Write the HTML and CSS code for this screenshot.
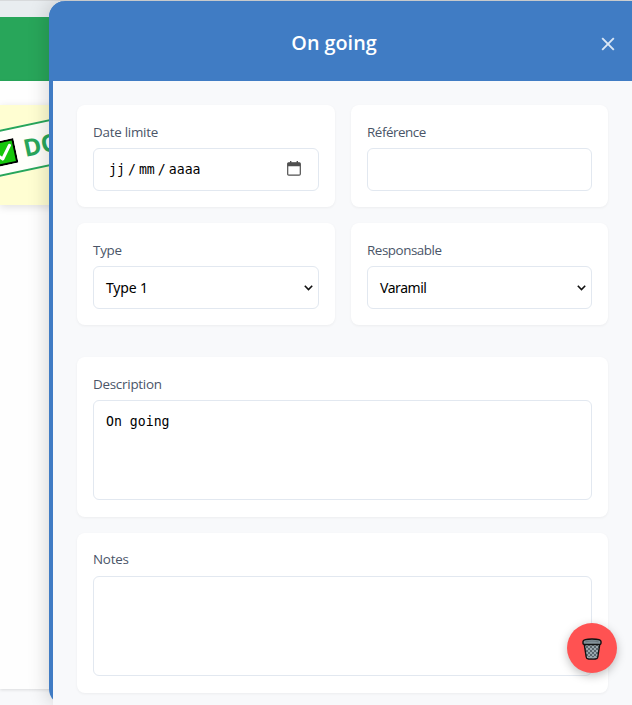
FILE: index.html
```html
<!DOCTYPE html>
<html lang="fr">
<head>
<meta charset="utf-8">
<title>On going</title>
<link rel="stylesheet" href="styles.css">
</head>
<body>
<div class="board">
  <div class="board-bar"></div>
  <div class="board-column">
    <div class="task">
      <div class="stamp">
        <svg class="check" viewBox="0 0 24 24"><rect x="1" y="1" width="22" height="22" fill="#16c60c" stroke="#000" stroke-width="2"/><path d="M5 12.5l5 5L19 6" fill="none" stroke="#fff" stroke-width="3" stroke-linecap="round" stroke-linejoin="round"/></svg>
        <span>DONE</span>
      </div>
    </div>
  </div>
</div>
<aside class="panel">
  <header class="panel-header">
    <h2>On going</h2>
    <svg class="close" viewBox="0 0 14 14"><path d="M1.2 1.2l11.6 11.6M12.8 1.2L1.2 12.8" stroke="currentColor" stroke-width="1.9" fill="none"/></svg>
  </header>
  <main class="panel-body">
    <div class="grid">
      <section class="card"><label>Date limite</label>
        <div class="field date"><span>jj</span><i>/</i><span>mm</span><i>/</i><span>aaaa</span>
          <svg class="calendar" viewBox="0 0 14 15"><path d="M1.8 1.8h10.4q1.1 0 1.1 1.1v10.2q0 1.1-1.1 1.1H1.8q-1.1 0-1.1-1.1V2.9q0-1.1 1.1-1.1z" fill="none" stroke="#505050" stroke-width="1.2"/><path d="M.7 1.7h12.6v3.6H.7zM3 0h1.4v2H3zM9.6 0H11v2H9.6z" fill="#505050"/></svg>
        </div></section>
      <section class="card"><label class="tight">Référence</label><div class="field"></div></section>
      <section class="card"><label>Type</label>
        <div class="field select"><span>Type 1</span><svg class="chevron" viewBox="0 0 9 6"><path d="M.8.8l3.7 3.8L8.2.8" fill="none" stroke="#111" stroke-width="1.6"/></svg></div></section>
      <section class="card"><label class="tight">Responsable</label>
        <div class="field select name"><span>Varamil</span><svg class="chevron" viewBox="0 0 9 6"><path d="M.8.8l3.7 3.8L8.2.8" fill="none" stroke="#111" stroke-width="1.6"/></svg></div></section>
    </div>
    <section class="card tall"><label>Description</label><div class="field area">On going</div></section>
    <section class="card tall"><label class="notes">Notes</label><div class="field area"></div></section>
  </main>
</aside>
<button class="delete" aria-label="Supprimer">
  <svg viewBox="0 0 20 22"><defs><pattern id="mesh" width="4" height="4" patternUnits="userSpaceOnUse"><rect width="4" height="4" fill="#9aa7ad"/><path d="M0 0h2v2H0zM2 2h2v2H2z" fill="#59666d"/></pattern></defs>
    <path d="M2.1 5.5L4.2 19Q4.5 21 6.5 21h7q2 0 2.3-2L17.9 5.5z" fill="url(#mesh)" stroke="#111" stroke-width="1.4"/>
    <path d="M5.2 19.2q4.8 1.1 9.6 0" fill="none" stroke="#9aa7ad" stroke-width="1.2"/>
    <path d="M1 3.6Q1 1 10 1t9 2.6v1.6q0 1.3-2 1.3H3q-2 0-2-1.3z" fill="#84939a" stroke="#111" stroke-width="1.4"/>
    <path d="M3.5 3.8q6.5-1.6 13 0" fill="none" stroke="#6b7980" stroke-width="1.2"/></svg>
</button>
</body>
</html>
```
FILE: styles.css
```css
* { box-sizing: border-box; }
body {
  margin: 0;
  width: 632px;
  height: 705px;
  position: relative;
  overflow: hidden;
  background: #f8f9fb;
  font-family: "Open Sans", "Noto Sans", sans-serif;
}
.board {
  height: 705px;
  padding-top: 16px;
  border-top: 1px solid #d8dadc;
  background: linear-gradient(#e9edf0 16px, #f8f9fb 16px);
}
.board-bar { height: 64px; background: #28a65a; }
.board-column {
  height: 608px;
  padding-top: 24px;
  background: #fefefe;
  box-shadow: 0 1px 3px rgba(0, 0, 0, .12);
}
.task {
  position: relative;
  height: 100px;
  background: #fffed2;
  box-shadow: 0 2px 8px rgba(0, 0, 0, .12);
}
.stamp {
  position: absolute;
  left: -22px;
  top: 15px;
  width: 140px;
  height: 46px;
  padding-left: 10px;
  display: flex;
  align-items: center;
  gap: 8px;
  border: 2px solid #28a65a;
  background: rgba(255, 255, 255, .88);
  color: #28a65a;
  font-size: 24px;
  font-weight: 700;
  line-height: 1;
  transform: rotate(-12deg);
}
.check { width: 25px; height: 25px; flex: none; }
.panel {
  position: absolute;
  left: 49px;
  top: 1px;
  width: 583px;
  height: 704px;
  border-left: 4px solid #407cc4;
  border-radius: 16px 0 0 16px;
  box-shadow: -2px 0 20px rgba(0, 0, 0, .16);
}
.panel-header {
  display: flex;
  align-items: center;
  height: 80px;
  margin-left: -4px;
  padding: 0 17px 0 40px;
  border-radius: 16px 0 0 0;
  background: #407cc4;
  color: #fff;
}
h2 {
  flex: 1;
  margin: 0;
  padding-top: 4px;
  font-size: 19.8px;
  font-weight: 600;
  line-height: 28px;
  text-align: center;
  position: relative;
  left: -11px;
}
.close { width: 14px; height: 14px; margin-top: 6px; color: #dbe7f5; }
.panel-body { height: 624px; padding: 24px; background: #f8f9fb; }
.grid {
  display: grid;
  grid-template-columns: 258px 257px;
  gap: 16px;
  margin-bottom: 32px;
}
.card {
  height: 102px;
  padding: 16px;
  border-radius: 8px;
  background: #fff;
  box-shadow: 0 1px 3px rgba(0, 0, 0, .05);
}
.tall { height: 160px; margin-bottom: 16px; }
label {
  display: block;
  height: 19px;
  margin-bottom: 8px;
  color: #4a5568;
  font-size: 13.4px;
  letter-spacing: -.25px;
  line-height: 22px;
  white-space: nowrap;
}
.tight { letter-spacing: -.45px; }
.notes { line-height: 20px; }
.field {
  display: flex;
  align-items: center;
  height: 43px;
  border: 1px solid #e2e8f0;
  border-radius: 6px;
  background: #fff;
  color: #000;
  font-family: "DejaVu Sans Mono", "Liberation Mono", monospace;
  font-size: 13.2px;
}
.date { padding: 0 17px 0 15px; font-size: 13.2px; }
.date i { width: 14px; text-align: center; font-style: normal; }
.calendar { width: 14px; height: 15px; margin: -2px 0 0 auto; }
.select {
  padding: 0 5px 0 12px;
  font-family: "Noto Sans", sans-serif;
  font-size: 14px;
  letter-spacing: -.15px;
  justify-content: space-between;
}
.name { letter-spacing: -.45px; }
.chevron { width: 9px; height: 6px; }
.area { height: 100px; align-items: flex-start; padding: 12px; line-height: 18px; }
.delete {
  position: absolute;
  left: 567px;
  top: 623px;
  width: 50px;
  height: 50px;
  padding: 0;
  display: flex;
  align-items: center;
  justify-content: center;
  border: 0;
  border-radius: 50%;
  background: #ff5252;
  box-shadow: 0 3px 10px rgba(0, 0, 0, .25);
}
.delete svg { width: 20px; height: 22px; margin-top: 2px; }
```
